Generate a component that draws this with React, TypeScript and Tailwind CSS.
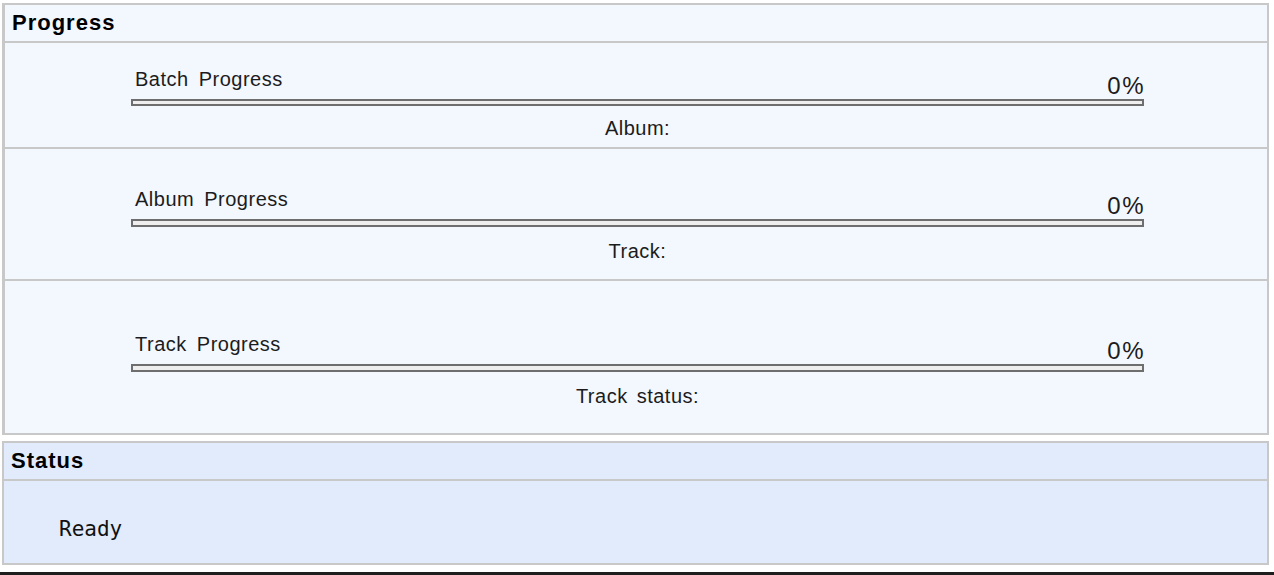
import React from 'react';

type Section = {
  label: string;
  caption: string;
  height: string;
  padTop: string;
  barHeight: string;
  captionGap: string;
  last?: boolean;
};

const sections: Section[] = [
  { label: 'Batch Progress', caption: 'Album:', height: 'h-[106px]', padTop: 'pt-[26px]', barHeight: 'h-[7px]', captionGap: 'mt-[12px]' },
  { label: 'Album Progress', caption: 'Track:', height: 'h-[132px]', padTop: 'pt-[40px]', barHeight: 'h-[8px]', captionGap: 'mt-[14px]' },
  { label: 'Track Progress', caption: 'Track status:', height: 'h-[152px]', padTop: 'pt-[53px]', barHeight: 'h-[8px]', captionGap: 'mt-[14px]', last: true },
];

function ProgressSection({ section }: { section: Section }) {
  return (
    <div className={`${section.height} ${section.padTop} ${section.last ? '' : 'border-b-2 border-[#c8c8c8]'}`}>
      <div className="ml-[126px] w-[1013px]">
        <div className="mb-[1px] flex items-end justify-between">
          <span className="mb-[9px] pl-[4px] text-[20px] leading-[20px] tracking-[0.5px] text-[#1c1c1c] [word-spacing:4px]">
            {section.label}
          </span>
          <span className="mr-[-1px] text-[24px] leading-[24px] tracking-[1.5px] text-[#1c1c1c]">0%</span>
        </div>
        <div className={`${section.barHeight} border-2 border-[#6e6e6e] bg-[#eeeeee]`} />
        <div
          className={`${section.captionGap} text-center text-[20px] leading-[20px] tracking-[0.5px] text-[#1c1c1c] [word-spacing:3px]`}
        >
          {section.caption}
        </div>
      </div>
    </div>
  );
}

export default function App() {
  return (
    <div className="h-[575px] overflow-hidden bg-white font-[family-name:Liberation_Sans,Arial,sans-serif]">
      {/* progress panel */}
      <div className="ml-[2px] mt-[3px] w-[1267px] border-2 border-l-[3px] border-[#c8c8c8] bg-[#f3f7fe]">
        <div className="h-[38px] border-b-2 border-[#c8c8c8] pl-[7px] text-[22px] font-bold leading-[36px] tracking-[1px] text-black">
          Progress
        </div>
        {sections.map((section) => (
          <ProgressSection key={section.label} section={section} />
        ))}
      </div>

      {/* status panel */}
      <div className="ml-[2px] mt-[6px] w-[1267px] border-2 border-[#c8c8c8] bg-[#e1ebfc]">
        <div className="h-[38px] border-b-2 border-[#c8c8c8] pl-[7px] text-[22px] font-bold leading-[36px] tracking-[1px] text-black">
          Status
        </div>
        <div className="h-[82px] pl-[55px] pt-[38px] font-[family-name:DejaVu_Sans_Mono,monospace] text-[21px] leading-[21px] text-[#111]">
          Ready
        </div>
      </div>

      <div className="mt-[7px] h-[3px] bg-[#1e1e1e]" />
    </div>
  );
}
